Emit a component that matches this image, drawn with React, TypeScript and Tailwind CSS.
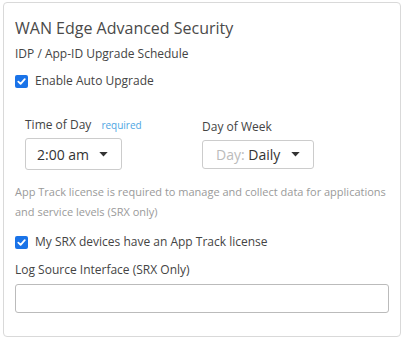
import React from "react";

function Check({ label }: { label: string }) {
  return (
    <label className="flex items-center gap-[7px] text-[12px] leading-[18px] text-[#444]">
      <span className="grid h-[13px] w-[13px] place-items-center rounded-[2px] bg-[#1a73e8]">
        <svg width="9" height="9" viewBox="0 0 10 10" fill="none" aria-hidden>
          <path d="M1.5 5.2 L4 7.6 L8.6 2.4" stroke="#fff" strokeWidth="2" strokeLinecap="round" strokeLinejoin="round" />
        </svg>
      </span>
      <span>{label}</span>
    </label>
  );
}

function Caret() {
  return (
    <svg width="9" height="5" viewBox="0 0 10 6" aria-hidden>
      <path d="M0 0 L10 0 L5 5.5 Z" fill="#333" />
    </svg>
  );
}

export default function App() {
  return (
    <div className="h-[340px] w-[404px] bg-white pl-[3px] pt-[2px] font-['Open_Sans',sans-serif]">
      <div className="h-[335px] w-[398px] rounded-[4px] border border-[#d9d9d9] px-[11px]">
        <h2 className="mt-[13px] text-[16px] leading-[24px] text-[#4a4a4a]">WAN Edge Advanced Security</h2>
        <div className="mt-[5px] text-[12px] leading-[18px] text-[#444]">IDP / App-ID Upgrade Schedule</div>
        <div className="mt-[9px]">
          <Check label="Enable Auto Upgrade" />
        </div>

        <div className="mt-[26px] flex pl-[10px]">
          <div className="w-[177px]">
            <div className="flex items-baseline gap-[10px] text-[12px] leading-[18px] text-[#444]">
              <span>Time of Day</span>
              <span className="text-[10px] text-[#4ea6e3]">required</span>
            </div>
            <div className="mt-[4px] flex h-[32px] w-[97px] items-center justify-between rounded-[3px] border border-[#ccc] pl-[11px] pr-[13px] text-[14px] text-[#333]">
              <span>2:00 am</span>
              <Caret />
            </div>
          </div>
          <div className="pt-[2px]">
            <div className="text-[12px] leading-[18px] text-[#444]">Day of Week</div>
            <div className="mt-[4px] flex h-[29px] w-[112px] items-center justify-between rounded-[3px] border border-[#ccc] pl-[13px] pr-[13px] text-[14px]">
              <span>
                <span className="text-[#bbb]">Day:</span> <span className="text-[#333]">Daily</span>
              </span>
              <Caret />
            </div>
          </div>
        </div>

        <p className="mt-[12px] text-[11px] leading-[20px] text-[#9a9a9a]">
          App Track license is required to manage and collect data for applications and service levels (SRX only)
        </p>
        <div className="mt-[11px]">
          <Check label="My SRX devices have an App Track license" />
        </div>
        <div className="mt-[10px] text-[12px] leading-[18px] text-[#444]">Log Source Interface (SRX Only)</div>
        <input className="mt-[5px] block h-[29px] w-[374px] rounded-[3px] border border-[#bbb] outline-none" />
      </div>
    </div>
  );
}
